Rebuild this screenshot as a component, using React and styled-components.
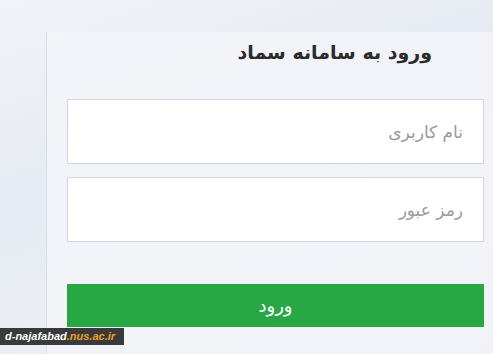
import React from 'react';
import styled, {createGlobalStyle} from 'styled-components';

const GlobalStyle = createGlobalStyle`
    html, body {
        margin: 0;
        padding: 0;
        height: 100%;
        overflow: hidden;
    }

    body {
        background: linear-gradient(160deg, #f1f3f8 0%, #e6eaf2 40%, #eceff5 70%, #e4e8f0 100%);
        font-family: "DejaVu Sans", "Noto Sans", sans-serif;
    }
`;

export default function App() {
    return (
        <Page>
            <GlobalStyle/>
            <Panel dir="rtl">
                <Title>ورود به سامانه سماد</Title>

                <Field placeholder="نام کاربری"/>
                <Field placeholder="رمز عبور" type="password" $gap={13}/>

                <Submit>ورود</Submit>
            </Panel>

            <Watermark>
                <span>d-najafabad</span><Orange>.nus.ac.ir</Orange>
            </Watermark>
        </Page>
    );
}

const Page = styled.div`
    position: relative;
    height: 354px;
    padding: 32px 0 0 46px;
    box-sizing: border-box;
`;

const Panel = styled.div`
    display: flex;
    flex-direction: column;
    height: 100%;
    padding: 0 9px 0 20px;
    background: rgba(244, 245, 249, 0.75);
    border-left: 1px solid #d9dde5;
`;

const Title = styled.h1`
    margin: 5px 52px 2px 0;
    font-size: 19px;
    font-weight: bold;
    line-height: 30px;
    color: #2b2b2b;
`;

const Field = styled.input`
    height: 65px;
    margin-top: ${props => props.$gap || 30}px;
    padding: 0 20px;
    box-sizing: border-box;
    border: 1px solid #d3d6dc;
    background: #fff;
    font-family: "DejaVu Sans", sans-serif;
    font-size: 17px;
    outline: none;

    &::placeholder {
        color: #9a9a9a;
    }
`;

const Submit = styled.button`
    height: 43px;
    margin-top: 42px;
    border: none;
    background: #28a745;
    color: #fff;
    font-family: "DejaVu Sans", sans-serif;
    font-size: 18px;
`;

const Watermark = styled.div`
    position: absolute;
    left: 0;
    top: 328px;
    width: 124px;
    height: 17px;
    padding-left: 5px;
    box-sizing: border-box;
    background: #3a3a3a;
    color: #fff;
    font-family: "Liberation Sans", sans-serif;
    font-size: 11px;
    font-weight: bold;
    font-style: italic;
    line-height: 17px;
    white-space: nowrap;
`;

const Orange = styled.span`
    color: #f0a020;
`;
